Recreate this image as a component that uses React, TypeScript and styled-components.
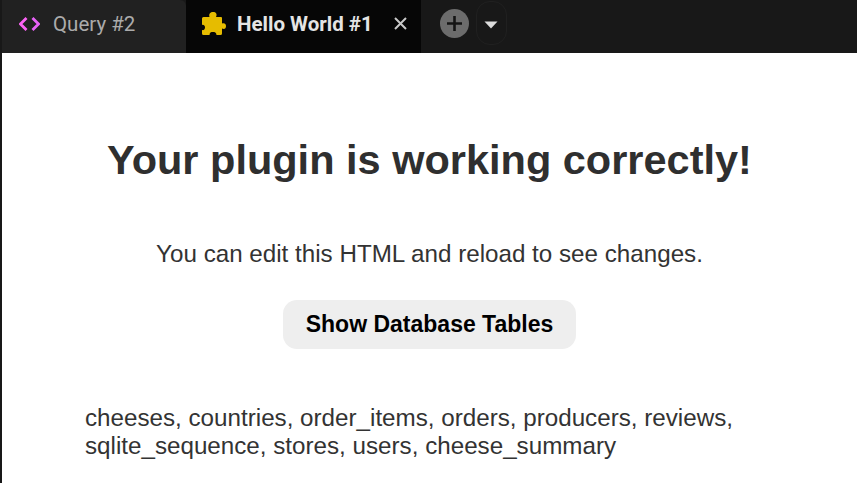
import React from "react";
import styled, { createGlobalStyle } from "styled-components";

const Global = createGlobalStyle`
  html, body { margin: 0; padding: 0; background: #fff; }
  body { width: 857px; height: 483px; overflow: hidden; font-family: "Liberation Sans", Arial, sans-serif; }
`;
const Shell = styled.div`
  width: 857px; height: 483px; display: flex; flex-direction: column;
  box-sizing: border-box; overflow: hidden;
`;
const TabBar = styled.div`
  height: 53px; flex: none; background: #181818; display: flex; align-items: stretch;
  padding-left: 2px; font-family: Roboto, sans-serif;
`;
const Tab = styled.div<{ $active?: boolean }>`
  box-sizing: border-box; display: flex; align-items: center;
  width: ${(p) => (p.$active ? "235px" : "184px")};
  padding: 0 0 6px ${(p) => (p.$active ? "16px" : "17px")};
  background: ${(p) => (p.$active ? "#060606" : "#212121")};
  color: ${(p) => (p.$active ? "#e4e4e4" : "#ababab")};
  font-size: 20.5px; font-weight: ${(p) => (p.$active ? 700 : 400)};
  border-radius: ${(p) => (p.$active ? "0" : "0 6px 0 0")};
`;
const TabLabel = styled.span<{ $active?: boolean }>`
  margin-left: ${(p) => (p.$active ? "11px" : "13px")};
  white-space: nowrap;
`;
const Close = styled.svg`
  margin-left: 21px; flex: none; color: #c8c8c8;
`;
const Actions = styled.div`
  display: flex; align-items: center; padding-left: 19px; gap: 7px; padding-bottom: 7px;
`;
const AddButton = styled.div`
  width: 29px; height: 29px; border-radius: 50%; background: #6c6c6c;
  display: flex; align-items: center; justify-content: center;
`;
const MenuButton = styled.div`
  width: 31px; height: 44px; box-sizing: border-box; border: 1px solid #202020; border-radius: 14px;
  display: flex; align-items: center; justify-content: center; padding: 3px 1px 0 0;
`;
const Body = styled.main`
  flex: 1; border-left: 2px solid #181818; background: #fff; color: #333;
  display: flex; flex-direction: column; align-items: center; min-height: 0;
`;
const Heading = styled.h1`
  margin: 83px 0 0; font-size: 41.5px; line-height: 48px; font-weight: 700; color: #2f2f2f; white-space: nowrap;
`;
const Lead = styled.p`
  margin: 56px 0 0; font-size: 24.2px; line-height: 28px; color: #333;
`;
const ActionButton = styled.button`
  margin-top: 32px; width: 293px; height: 49px; border: none; border-radius: 14px; background: #eee;
  color: #000; font: 700 23px/28px "Liberation Sans", Arial, sans-serif; padding: 0 0 2px;
`;
const Result = styled.p`
  align-self: flex-start; margin: 55px 0 0 83px; width: 700px; font-size: 24.2px; line-height: 28px; color: #333;
`;

export default function App() {
  return (
    <Shell>
      <Global />
      <TabBar>
        <Tab>
          <svg width="21" height="14" viewBox="0 0 21 14" fill="none" strokeWidth="2.8">
            <path d="M7.5 1 L1.5 7 L7.5 13" stroke="#fb62f4" />
            <path d="M13.5 1 L19.5 7 L13.5 13" stroke="#e862f8" />
          </svg>
          <TabLabel>Query #2</TabLabel>
        </Tab>
        <Tab $active>
          <svg width="24" height="23" viewBox="0 0 24 23" fill="#e6bc00">
            <path d="M1.5 5 H7.5 C6.5 1.5 8.5 0 11 0 C14 0 15.5 2 14 5 H19 Q20 5 20 6 V11.5 C22.5 10.5 24 12 24 14 C24 16.5 22.5 17.5 20 16.5 V21.5 Q20 23 18.5 23 H14.5 C14.5 20.5 12.5 20 11 20 C9 20 7.5 20.5 7.5 23 H1.5 Q0 23 0 21.5 V18 C1.5 18.5 3 17.5 3 15.5 C3 13.5 1.5 12.5 0 13 V6.5 Q0 5 1.5 5Z" />
          </svg>
          <TabLabel $active>Hello World #1</TabLabel>
          <Close width="13" height="13" viewBox="0 0 13 13" fill="none" stroke="currentColor" strokeWidth="2">
            <path d="M1 1 L12 12 M12 1 L1 12" />
          </Close>
        </Tab>
        <Actions>
          <AddButton>
            <svg width="15" height="15" viewBox="0 0 15 15" fill="none" stroke="#141414" strokeWidth="2.6">
              <path d="M7.5 0 V15 M0 7.5 H15" />
            </svg>
          </AddButton>
          <MenuButton>
            <svg width="14" height="8" viewBox="0 0 14 8" fill="#dcdcdc">
              <path d="M0.5 0.5 H13.5 L7 7.5 Z" />
            </svg>
          </MenuButton>
        </Actions>
      </TabBar>
      <Body>
        <Heading>Your plugin is working correctly!</Heading>
        <Lead>You can edit this HTML and reload to see changes.</Lead>
        <ActionButton>Show Database Tables</ActionButton>
        <Result>cheeses, countries, order_items, orders, producers, reviews, sqlite_sequence, stores, users, cheese_summary</Result>
      </Body>
    </Shell>
  );
}
